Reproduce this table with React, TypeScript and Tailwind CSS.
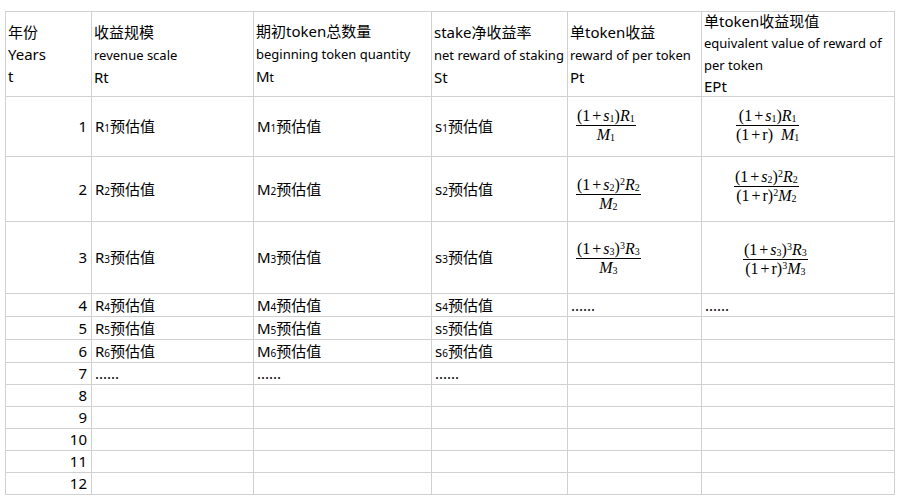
import type { ReactNode } from 'react';

const font = { fontFamily: '"Noto Sans", "Noto Sans CJK SC", sans-serif' };

// small inline digit as used in "R1预估值"
const Sub = ({ children }: { children: ReactNode }) => (
  <span className="text-[10px] leading-none">{children}</span>
);

// math-style subscript / superscript for the formula cells
const MSub = ({ children }: { children: ReactNode }) => (
  <sub className="text-[10px] not-italic relative top-[1px]">{children}</sub>
);
const MSup = ({ children }: { children: ReactNode }) => (
  <sup className="text-[10px] not-italic">{children}</sup>
);

function Frac({ num, den }: { num: ReactNode; den: ReactNode }) {
  return (
    <span className="inline-flex flex-col items-stretch font-['Liberation_Serif',serif] text-[16px] text-black">
      <span className="px-[1px] leading-[18px] whitespace-nowrap text-center">{num}</span>
      <span className="border-t border-black leading-[18px] whitespace-nowrap text-center">{den}</span>
    </span>
  );
}

const plus = <span className="mx-[2px]">+</span>;

const numer = (n: string, pow?: string) => (
  <>
    (1{plus}<i>s</i>
    <MSub>{n}</MSub>){pow && <MSup>{pow}</MSup>}
    <i>R</i>
    <MSub>{n}</MSub>
  </>
);

const headers: { lines: ReactNode[]; tight?: boolean }[] = [
  { lines: ['年份', 'Years', 't'] },
  { lines: ['收益规模', <span className="text-[13px]">revenue scale</span>, 'Rt'] },
  {
    lines: [
      '期初token总数量',
      <span className="text-[13px]">beginning token quantity</span>,
      <span>
        M<span className="text-[12px]">t</span>
      </span>,
    ],
  },
  { lines: ['stake净收益率', <span className="text-[13px]">net reward of staking</span>, 'St'] },
  { lines: ['单token收益', <span className="text-[13px]">reward of per token</span>, 'Pt'] },
  {
    tight: true,
    lines: [
      '单token收益现值',
      <span className="text-[13px]">equivalent value of reward of</span>,
      <span className="text-[13px]">per token</span>,
      'EPt',
    ],
  },
];

const cell = 'bg-white flex items-center px-[3px] text-[15px] text-black whitespace-nowrap overflow-hidden';

export default function App() {
  const est = (letter: string, n: number) => (
    <span>
      {letter}
      <Sub>{n}</Sub>预估值
    </span>
  );

  return (
    <div className="w-[901px] h-[503px] bg-white overflow-hidden" style={font}>
      <div className="ml-[5px] mt-[11px] w-[890px] p-px bg-[#d0d0d0] grid gap-px grid-cols-[85px_161px_177px_135px_133px_192px] grid-rows-[84px_59px_64px_71px_22px_22px_22px_21px_21px_21px_21px_21px_21px]">
        {/* header */}
        {headers.map((h, i) => (
          <div key={i} className="bg-white flex flex-col justify-center px-[2px] text-[15px] text-black whitespace-nowrap">
            {h.lines.map((l, j) => (
              <div key={j} className={h.tight ? 'leading-[21px]' : 'leading-[22px]'}>
                {l}
              </div>
            ))}
          </div>
        ))}

        {/* row 1 */}
        <div className={cell + ' justify-end pr-[4px]'}>1</div>
        <div className={cell}>{est('R', 1)}</div>
        <div className={cell}>{est('M', 1)}</div>
        <div className={cell}>{est('s', 1)}</div>
        <div className="bg-white pl-[8px] pt-[6px]">
          <Frac num={numer('1')} den={<><i>M</i><MSub>1</MSub></>} />
        </div>
        <div className="bg-white pl-[34px] pt-[6px]">
          <Frac
            num={numer('1')}
            den={<>(1{plus}r)<span className="ml-[8px]"><i>M</i><MSub>1</MSub></span></>}
          />
        </div>

        {/* row 2 */}
        <div className={cell + ' justify-end pr-[4px]'}>2</div>
        <div className={cell}>{est('R', 2)}</div>
        <div className={cell}>{est('M', 2)}</div>
        <div className={cell}>{est('s', 2)}</div>
        <div className="bg-white pl-[8px] pt-[15px]">
          <Frac num={numer('2', '2')} den={<><i>M</i><MSub>2</MSub></>} />
        </div>
        <div className="bg-white pl-[32px] pt-[7px]">
          <Frac num={numer('2', '2')} den={<>(1{plus}r)<MSup>2</MSup><i>M</i><MSub>2</MSub></>} />
        </div>

        {/* row 3 */}
        <div className={cell + ' justify-end pr-[4px]'}>3</div>
        <div className={cell}>{est('R', 3)}</div>
        <div className={cell}>{est('M', 3)}</div>
        <div className={cell}>{est('s', 3)}</div>
        <div className="bg-white pl-[8px] pt-[14px]">
          <Frac num={numer('3', '3')} den={<><i>M</i><MSub>3</MSub></>} />
        </div>
        <div className="bg-white pl-[41px] pt-[15px]">
          <Frac num={numer('3', '3')} den={<>(1{plus}r)<MSup>3</MSup><i>M</i><MSub>3</MSub></>} />
        </div>

        {/* row 4 */}
        <div className={cell + ' justify-end pr-[4px]'}>4</div>
        <div className={cell}>{est('R', 4)}</div>
        <div className={cell}>{est('M', 4)}</div>
        <div className={cell}>{est('s', 4)}</div>
        <div className={cell + ' text-[12px]'}>......</div>
        <div className={cell + ' text-[12px]'}>......</div>

        {/* rows 5-6 */}
        {[5, 6].map((n) => (
          <Row key={n} n={n}>
            <div className={cell}>{est('R', n)}</div>
            <div className={cell}>{est('M', n)}</div>
            <div className={cell}>{est('s', n)}</div>
          </Row>
        ))}

        {/* row 7 */}
        <Row n={7}>
          <div className={cell + ' text-[12px]'}>......</div>
          <div className={cell + ' text-[12px]'}>......</div>
          <div className={cell + ' text-[12px]'}>......</div>
        </Row>

        {[8, 9, 10, 11, 12].map((n) => (
          <Row key={n} n={n}>
            <div className="bg-white" />
            <div className="bg-white" />
            <div className="bg-white" />
          </Row>
        ))}
      </div>
    </div>
  );
}

function Row({ n, children }: { n: number; children: ReactNode }) {
  return (
    <>
      <div className={cell + ' justify-end pr-[4px]'}>{n}</div>
      {children}
      <div className="bg-white" />
      <div className="bg-white" />
    </>
  );
}
